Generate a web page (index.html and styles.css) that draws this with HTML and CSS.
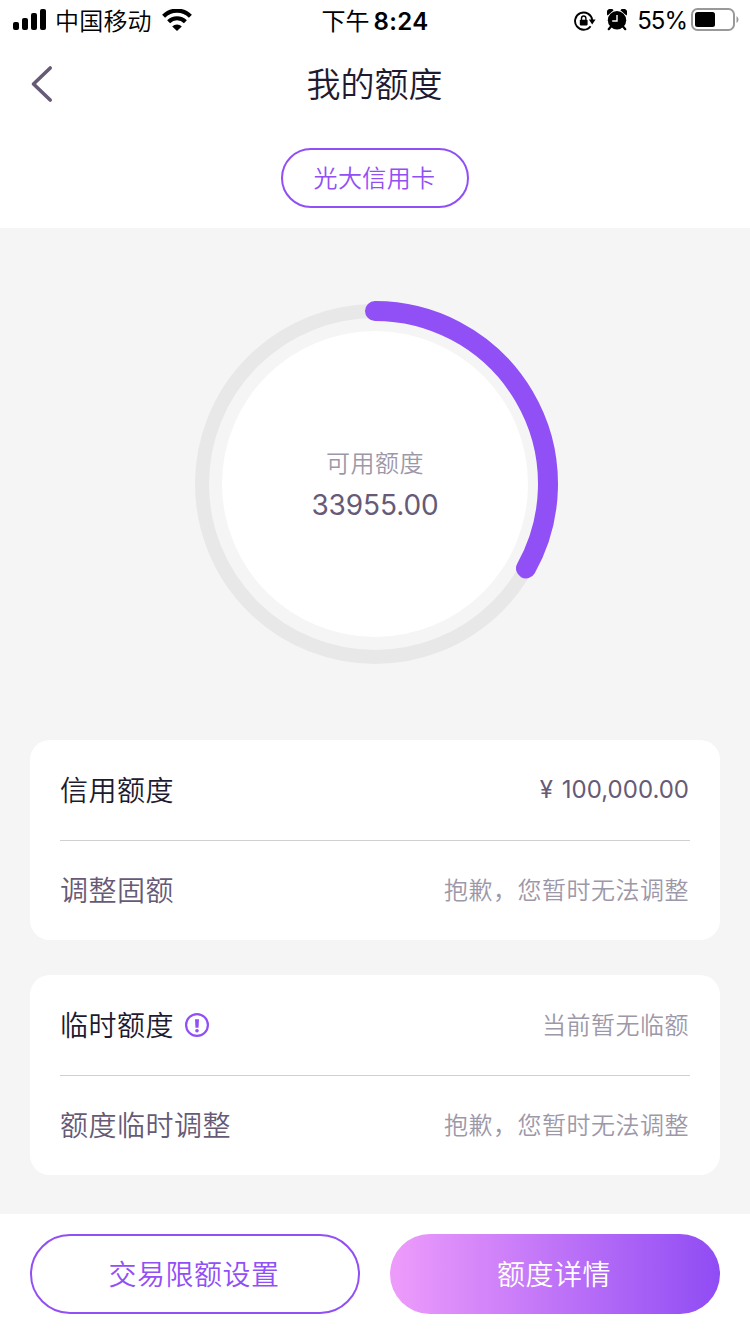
FILE: index.html
```html
<!DOCTYPE html>
<html lang="zh-CN">
  <head>
    <meta charset="UTF-8" />
    <meta name="viewport" content="width=device-width, initial-scale=1.0" />
    <title>我的额度</title>
    <link rel="stylesheet" href="styles.css">
  </head>
  <body>
    <!-- Status bar -->
    <div class="status-bar">
      <div class="status-left">
        <svg class="signal" width="34" height="22" viewBox="0 0 34 22">
          <rect x="0" y="13" width="6" height="8" rx="2" />
          <rect x="9" y="9" width="6" height="12" rx="2" />
          <rect x="18" y="4" width="6" height="17" rx="2" />
          <rect x="27" y="0" width="6" height="21" rx="2" />
        </svg>
        <span class="carrier">中国移动</span>
        <svg class="wifi" width="30" height="22" viewBox="0 0 30 22">
          <path d="M1.6 7.2a19 19 0 0 1 26.8 0M6.6 12.7a12 12 0 0 1 16.8 0" fill="none" stroke="#000" stroke-width="4.2" />
          <path d="M15 22l-4.8-4.6a6.9 6.9 0 0 1 9.6 0z" />
        </svg>
      </div>
      <div class="status-time">下午<span class="clock">8:24</span></div>
      <div class="status-right">
        <svg class="lock" width="22" height="20" viewBox="0 0 22 20">
          <path d="M16.6 15.2A8.6 8.6 0 1 1 18.2 9" fill="none" stroke="#000" stroke-width="1.9" />
          <path d="M14.8 8.6h6.8l-3.4 4.8z" />
          <rect x="5.8" y="8.8" width="7.8" height="5.6" rx="0.8" />
          <path d="M7.5 9V7.2a2.2 2.2 0 0 1 4.4 0V9" fill="none" stroke="#000" stroke-width="1.4" />
        </svg>
        <svg class="alarm" width="20" height="22" viewBox="0 0 20 22">
          <circle cx="10" cy="11.3" r="9.2" />
          <path d="M.6 6.4A3.8 3.8 0 0 1 6.6 1.2zM19.4 6.4a3.8 3.8 0 0 0-6-5.2z" />
          <path d="M4 17.5l-2.3 2.7M16 17.5l2.3 2.7" stroke="#000" stroke-width="2.2" stroke-linecap="round" />
          <path d="M10 6v6H5.2" fill="none" stroke="#fff" stroke-width="1.4" />
        </svg>
        <span class="percent">55%</span>
        <svg class="battery" width="48" height="24" viewBox="0 0 48 24">
          <rect x="1" y="1" width="42" height="21" rx="5.5" fill="none" stroke="#999" stroke-width="2" />
          <rect x="4" y="4" width="20" height="15" rx="2.5" />
          <path d="M45.5 8.2c2.6 1.2 2.6 5.6 0 6.8z" fill="#999" />
        </svg>
      </div>
    </div>

    <!-- Title bar -->
    <div class="nav-bar">
      <a href="#" class="back">
        <svg width="24" height="38" viewBox="0 0 24 38">
          <path d="M20.2 3L3.5 19l16.7 16" fill="none" stroke="#665a76" stroke-width="3.6" stroke-linecap="round" stroke-linejoin="round" />
        </svg>
      </a>
      <h1>我的额度</h1>
    </div>
    <div class="tabs">
      <a href="#" class="tab">光大信用卡</a>
    </div>

    <!-- Main content -->
    <div class="main-content">
      <div class="gauge">
        <svg class="gauge-ring" width="370" height="370" viewBox="-185 -185 370 370">
          <circle r="173" fill="none" stroke="#e8e8e8" stroke-width="14" />
          <circle r="153" fill="#fff" />
          <path d="M0-173A173 173 0 0 1 151 84.4" fill="none" stroke="#914ff6" stroke-width="20" stroke-linecap="round" />
        </svg>
        <div class="gauge-text">
          <span class="gauge-label">可用额度</span>
          <span class="gauge-value">33955.00</span>
        </div>
      </div>

      <div class="card">
        <div class="row">
          <span class="row-title">信用额度</span>
          <span class="amount"><span class="yen">¥</span>100,000.00</span>
        </div>
        <div class="row">
          <span class="row-action">调整固额</span>
          <span class="hint">抱歉，您暂时无法调整</span>
        </div>
      </div>

      <div class="card">
        <div class="row">
          <span class="row-title">临时额度</span>
          <svg class="info" width="24" height="24" viewBox="0 0 24 24">
            <circle cx="12" cy="12" r="10.9" fill="none" stroke="#914ff6" stroke-width="2.2" />
            <path d="M10 6.2h4l-.5 8.6h-3z" fill="#914ff6" />
            <circle cx="12" cy="17.8" r="1.8" fill="#914ff6" />
          </svg>
          <span class="hint">当前暂无临额</span>
        </div>
        <div class="row">
          <span class="row-action">额度临时调整</span>
          <span class="hint">抱歉，您暂时无法调整</span>
        </div>
      </div>
    </div>

    <!-- Bottom buttons -->
    <div class="footer">
      <button class="btn btn-outline">交易限额设置</button>
      <button class="btn btn-fill">额度详情</button>
    </div>
  </body>
</html>
```
FILE: styles.css
```css
* {
  box-sizing: border-box;
}

body {
  margin: 0;
  width: 750px;
  height: 1334px;
  display: flex;
  flex-direction: column;
  font-family: Inter, "Noto Sans CJK SC", sans-serif;
  font-weight: 350;
  background-color: #fff;
  color: #201a30;
}

a {
  text-decoration: none;
}

svg {
  display: block;
  flex-shrink: 0;
}

/* Status bar styles */
.status-bar {
  height: 40px;
  padding: 0 11px 0 13px;
  display: grid;
  grid-template-columns: 1fr auto 1fr;
  align-items: center;
  font-size: 24px;
  line-height: 40px;
  color: #000;
}

.status-left,
.status-right {
  display: flex;
  align-items: center;
}

.status-right {
  justify-content: flex-end;
}

.carrier {
  margin: 0 10px 0 8px;
  padding-top: 3px;
  line-height: 37px;
  letter-spacing: 0.2px;
}

.status-time {
  padding: 3px 2px 0 0;
  line-height: 37px;
  font-weight: 400;
}

.clock {
  margin-left: 4px;
  font-weight: 600;
  letter-spacing: 0.4px;
}

.lock {
  margin-top: 1px;
}

.alarm {
  margin: 0 10px 0 11px;
}

.percent {
  margin-right: 4px;
  padding-top: 2px;
  line-height: 38px;
  font-weight: 400;
  letter-spacing: -1px;
}

/* Title bar styles */
.nav-bar {
  height: 88px;
  padding: 0 30px;
  display: grid;
  grid-template-columns: 1fr auto 1fr;
  align-items: center;
}

.nav-bar h1 {
  margin: 0;
  padding: 2px 1px 0 0;
  font-size: 34px;
  font-weight: 350;
  line-height: 86px;
}

.tabs {
  height: 100px;
  padding-top: 20px;
  display: flex;
  justify-content: center;
}

.tab {
  width: 188px;
  height: 60px;
  padding-right: 1px;
  border: 2px solid #914ff6;
  border-radius: 30px;
  font-size: 24px;
  line-height: 57px;
  letter-spacing: 0.4px;
  text-align: center;
  color: #914ff6;
}

/* Main content styles */
.main-content {
  height: 986px;
  padding: 71px 30px 0;
  background-color: #f5f5f5;
}

.gauge {
  display: grid;
  place-items: center;
  margin-bottom: 71px;
}

.gauge-ring,
.gauge-text {
  grid-area: 1 / 1;
}

.gauge-text {
  display: flex;
  flex-direction: column;
  align-items: center;
  padding-top: 2px;
}

.gauge-label {
  font-size: 24px;
  line-height: 40px;
  letter-spacing: 0.5px;
  color: #9d98a8;
}

.gauge-value {
  font-size: 28px;
  font-weight: 400;
  line-height: 42px;
  letter-spacing: -0.1px;
  color: #665a76;
}

.card {
  margin-bottom: 35px;
  padding: 0 30px;
  border-radius: 20px;
  background-color: #fff;
}

.row {
  height: 100px;
  display: flex;
  align-items: center;
}

.row + .row {
  border-top: 1px solid #d0cfd2;
}

.row-title,
.row-action {
  padding-bottom: 3px;
  font-size: 28px;
  letter-spacing: 0.5px;
}

.row-action {
  padding-bottom: 4px;
  color: #665a76;
}

.info {
  margin-left: 11px;
}

.hint,
.amount {
  margin-left: auto;
  padding: 0 1px 4px 0;
  font-size: 24px;
  letter-spacing: 0.5px;
  color: #9d98a8;
}

.amount {
  padding-bottom: 1px;
  font-weight: 400;
  letter-spacing: 0;
  color: #665a76;
}

.yen {
  margin-right: 9px;
}

/* Bottom button styles */
.footer {
  height: 120px;
  padding: 20px 30px;
  display: grid;
  grid-template-columns: 1fr 1fr;
  gap: 30px;
}

.btn {
  height: 80px;
  padding: 0 2px 3px 0;
  border: none;
  border-radius: 40px;
  font-family: inherit;
  font-size: 28px;
  font-weight: 350;
  letter-spacing: 0.5px;
  cursor: pointer;
}

.btn-outline {
  border: 2px solid #914ff6;
  background-color: #fff;
  color: #914ff6;
}

.btn-fill {
  background: linear-gradient(90deg, #ee9cfb, #904cf4);
  color: #fff;
}
```
